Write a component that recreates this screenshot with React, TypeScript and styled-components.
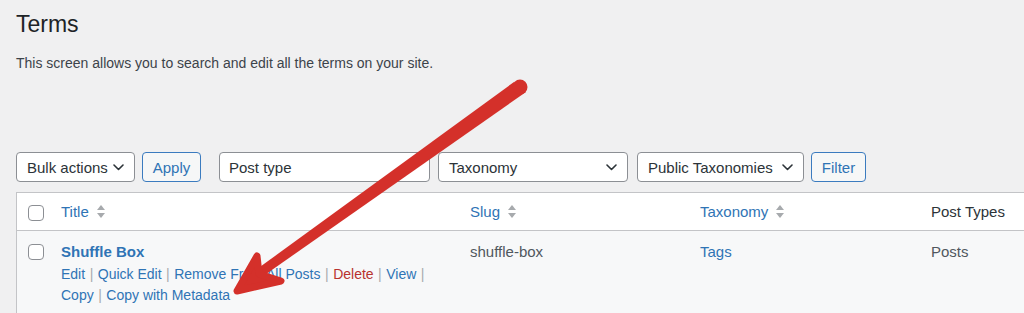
import React from "react";
import styled, { createGlobalStyle } from "styled-components";

const GlobalStyle = createGlobalStyle`
    html, body {
        margin: 0;
        padding: 0;
        background: #f0f0f1;
        overflow: hidden;
        font-family: "Liberation Sans", Arial, sans-serif;
    }
`;

const Page = styled.div`
    position: relative;
    width: 1024px;
    height: 313px;
    padding-left: 16px;
    box-sizing: border-box;
    overflow: hidden;
`;

const Heading = styled.h1`
    margin: 0;
    padding-top: 9px;
    font-size: 23px;
    line-height: 30px;
    font-weight: 400;
    color: #1d2327;
`;

const Description = styled.p`
    margin: 14px 0 0;
    font-size: 14px;
    line-height: 20px;
    color: #3c434a;
`;

const Toolbar = styled.div`
    display: flex;
    align-items: center;
    margin-top: 79px;
    height: 30px;
`;

const SelectBox = styled.div<{ $width: number; $gap: number }>`
    display: flex;
    align-items: center;
    justify-content: space-between;
    box-sizing: border-box;
    width: ${(p) => p.$width}px;
    height: 30px;
    margin-right: ${(p) => p.$gap}px;
    padding: 0 10px 0 10px;
    background: #fff;
    border: 1px solid #8c8f94;
    border-radius: 4px;
    font-size: 15px;
    color: #2c3338;
`;

const TextInput = styled.input<{ $width: number; $gap: number }>`
    box-sizing: border-box;
    width: ${(p) => p.$width}px;
    height: 30px;
    margin: 0 ${(p) => p.$gap}px 0 0;
    padding: 0 9px;
    background: #fff;
    border: 1px solid #8c8f94;
    border-radius: 4px;
    font-family: "Liberation Sans", Arial, sans-serif;
    font-size: 15px;
    color: #2c3338;
    outline: none;
`;

const Button = styled.button<{ $width: number; $gap: number }>`
    box-sizing: border-box;
    width: ${(p) => p.$width}px;
    height: 30px;
    margin-right: ${(p) => p.$gap}px;
    padding: 0;
    background: #f6f7f7;
    border: 1px solid #3b7bbf;
    border-radius: 4px;
    font-family: "Liberation Sans", Arial, sans-serif;
    font-size: 15px;
    color: #2f74b5;
    cursor: pointer;
`;

const Table = styled.div`
    margin-top: 10px;
    width: 1100px;
    border: 1px solid #c3c4c7;
    background: #fff;
`;

const Columns = "34px 409px 230px 231px 1fr";

const HeaderRow = styled.div`
    display: grid;
    grid-template-columns: ${Columns};
    height: 37px;
    align-items: center;
    border-bottom: 1px solid #c3c4c7;
    background: #fff;
`;

const BodyRow = styled.div`
    display: grid;
    grid-template-columns: ${Columns};
    align-items: start;
    padding: 10px 0 10px;
    background: #f7f8f9;
`;

const CheckCell = styled.div<{ $top: number }>`
    padding: ${(p) => p.$top}px 0 0 11px;
`;

const Checkbox = styled.span`
    display: block;
    box-sizing: border-box;
    width: 16px;
    height: 16px;
    border: 1px solid #8c8f94;
    border-radius: 4px;
    background: #fff;
`;

const HeaderCell = styled.div<{ $link?: boolean }>`
    display: flex;
    align-items: center;
    gap: 8px;
    padding: 0 10px;
    font-size: 15px;
    color: ${(p) => (p.$link ? "#2f74b5" : "#2c3338")};
`;

const Cell = styled.div<{ $link?: boolean }>`
    padding: 0 10px;
    font-size: 15px;
    line-height: 21px;
    color: ${(p) => (p.$link ? "#2f74b5" : "#50575e")};
`;

const TermName = styled.div`
    font-size: 15px;
    line-height: 21px;
    font-weight: 700;
    color: #2f74b5;
`;

const RowActions = styled.div`
    padding-top: 2px;
    font-size: 14px;
    line-height: 21px;
`;

const ActionLine = styled.div`
    white-space: nowrap;
`;

const Action = styled.span<{ $danger?: boolean }>`
    color: ${(p) => (p.$danger ? "#b8322f" : "#2f74b5")};
`;

const Sep = styled.span`
    color: #a7aaad;
    margin: 0 4.5px;
`;

const Overlay = styled.svg`
    position: absolute;
    left: 0;
    top: 0;
    pointer-events: none;
`;

function Chevron() {
    return (
        <svg width="11" height="7" viewBox="0 0 11 7">
            <polyline points="1,1 5.5,5.5 10,1" fill="none" stroke="#2c3338" strokeWidth="1.6" strokeLinecap="round" strokeLinejoin="round" />
        </svg>
    );
}

function SortIcon() {
    return (
        <svg width="8" height="15" viewBox="0 0 8 15">
            <polygon points="0,6 4,1 8,6" fill="#a7aaad" />
            <polygon points="0,9 4,14 8,9" fill="#a7aaad" />
        </svg>
    );
}

function Arrow() {
    return (
        <Overlay width="1024" height="313" viewBox="0 0 1024 313">
            <polygon points="514,82 526,92 259,279 253,272" fill="#d4302a" />
            <circle cx="520" cy="87" r="7.5" fill="#d4302a" />
            <polygon
                points="237,291 257,256 259,274 281,281"
                fill="#d4302a"
                stroke="#d4302a"
                strokeWidth="7"
                strokeLinejoin="round"
            />
        </Overlay>
    );
}

const actionsTop: { label: string; danger?: boolean }[] = [
    { label: "Edit" },
    { label: "Quick Edit" },
    { label: "Remove From All Posts" },
    { label: "Delete", danger: true },
    { label: "View" },
];

function App(): JSX.Element {
    return (
        <Page>
            <GlobalStyle />
            <Heading>Terms</Heading>
            <Description>This screen allows you to search and edit all the terms on your site.</Description>

            <Toolbar>
                <SelectBox $width={119} $gap={7}>
                    <span>Bulk actions</span>
                    <Chevron />
                </SelectBox>
                <Button $width={59} $gap={18}>Apply</Button>
                <TextInput $width={211} $gap={8} value="Post type" readOnly />
                <SelectBox $width={190} $gap={9}>
                    <span>Taxonomy</span>
                    <Chevron />
                </SelectBox>
                <SelectBox $width={167} $gap={7}>
                    <span>Public Taxonomies</span>
                    <Chevron />
                </SelectBox>
                <Button $width={55} $gap={0}>Filter</Button>
            </Toolbar>

            <Table>
                <HeaderRow>
                    <CheckCell $top={2}>
                        <Checkbox />
                    </CheckCell>
                    <HeaderCell $link>
                        Title <SortIcon />
                    </HeaderCell>
                    <HeaderCell $link>
                        Slug <SortIcon />
                    </HeaderCell>
                    <HeaderCell $link>
                        Taxonomy <SortIcon />
                    </HeaderCell>
                    <HeaderCell>Post Types</HeaderCell>
                </HeaderRow>

                <BodyRow>
                    <CheckCell $top={3}>
                        <Checkbox />
                    </CheckCell>
                    <Cell>
                        <TermName>Shuffle Box</TermName>
                        <RowActions>
                            <ActionLine>
                                {actionsTop.map((a, i) => (
                                    <React.Fragment key={a.label}>
                                        {i > 0 && <Sep>|</Sep>}
                                        <Action $danger={a.danger}>{a.label}</Action>
                                    </React.Fragment>
                                ))}
                                <Sep>|</Sep>
                            </ActionLine>
                            <ActionLine>
                                <Action>Copy</Action>
                                <Sep>|</Sep>
                                <Action>Copy with Metadata</Action>
                            </ActionLine>
                        </RowActions>
                    </Cell>
                    <Cell>shuffle-box</Cell>
                    <Cell $link>Tags</Cell>
                    <Cell>Posts</Cell>
                </BodyRow>
            </Table>

            <Arrow />
        </Page>
    );
}

export default App;
